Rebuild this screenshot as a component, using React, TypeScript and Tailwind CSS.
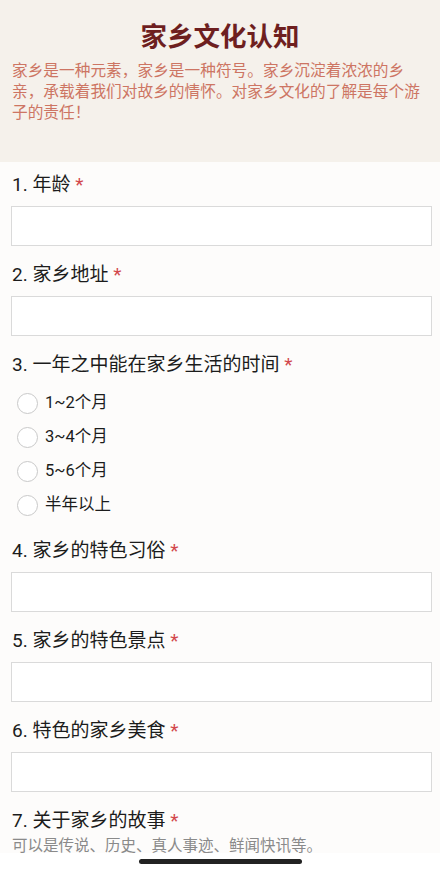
const questions = [
    { no: 1, title: "年龄", type: "text" },
    { no: 2, title: "家乡地址", type: "text" },
    { no: 3, title: "一年之中能在家乡生活的时间", type: "radio", options: ["1~2个月", "3~4个月", "5~6个月", "半年以上"] },
    { no: 4, title: "家乡的特色习俗", type: "text" },
    { no: 5, title: "家乡的特色景点", type: "text" },
    { no: 6, title: "特色的家乡美食", type: "text" },
    { no: 7, title: "关于家乡的故事", type: "textarea", hint: "可以是传说、历史、真人事迹、鲜闻快讯等。" },
]

const App = () => {
    return (
        <div className="w-[440px] h-[870px] flex flex-col bg-white font-['Roboto','Noto_Sans_CJK_SC',sans-serif]">
            <div className="flex-1 overflow-hidden bg-[#fdfcfb]">
                {/* header */}
                <div className="h-[162px] bg-[#f5f1eb] pt-[18px] px-3">
                    <h1 className="text-center text-[26.5px] leading-[34px] font-bold text-[#6e1f1f] font-['Noto_Sans_CJK_SC',sans-serif]">家乡文化认知</h1>
                    <p className="mt-[7px] text-[15.7px] leading-[21px] text-[#cd7563] font-['Noto_Sans_CJK_SC',sans-serif]">
                        家乡是一种元素，家乡是一种符号。家乡沉淀着浓浓的乡亲，承载着我们对故乡的情怀。对家乡文化的了解是每个游子的责任！
                    </p>
                </div>
                {/* questions */}
                <div className="pt-[10px] pl-[11px] pr-[8px]">
                    {questions.map((q) => (
                        <div key={q.no} className="mb-4">
                            <p className="pl-px text-[19px] leading-[26px] text-[#1c1c1c]">
                                {q.no}. {q.title} <span className="text-[#d2474c]">*</span>
                            </p>
                            {q.type === "text" && (
                                <div className="mt-2 h-10 border border-[#dadada] bg-white"></div>
                            )}
                            {q.type === "radio" && (
                                <div className="mt-2">
                                    {q.options?.map((opt) => (
                                        <div key={opt} className="flex items-center h-[34px] pl-[6px]">
                                            <span className="w-[21px] h-[21px] rounded-full border-[1.5px] border-[#c9c9c9] bg-white"></span>
                                            <span className="ml-[7px] text-[16.5px] text-[#1c1c1c]">{opt}</span>
                                        </div>
                                    ))}
                                </div>
                            )}
                            {q.type === "textarea" && (
                                <p className="pl-px text-[15.5px] leading-[21px] text-[#8a8a8a] font-['Noto_Sans_CJK_SC',sans-serif]">{q.hint}</p>
                            )}
                        </div>
                    ))}
                </div>
            </div>
            {/* home indicator */}
            <div className="h-[17px] bg-white flex items-center justify-center">
                <div className="w-[163px] h-[5px] rounded-full bg-[#222]"></div>
            </div>
        </div>
    )
}

export default App
